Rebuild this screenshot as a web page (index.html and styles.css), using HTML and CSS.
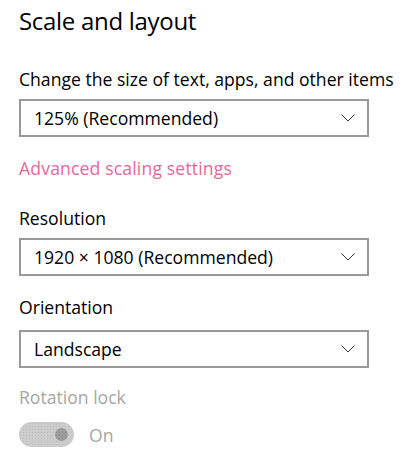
FILE: index.html
```html
<!DOCTYPE html>
<html>
<head>
<meta charset="utf-8">
<link rel="stylesheet" href="styles.css">
</head>
<body>
<div class="page">
  <h1 class="title">Scale and layout</h1>
  <div class="label label-first">Change the size of text, apps, and other items</div>
  <div class="select">
    <span class="select-text">125% (Recommended)</span>
    <svg class="chev" width="14" height="8" viewBox="0 0 14 8"><path d="M0.5 0.5 L7 7 L13.5 0.5" fill="none" stroke="#333" stroke-width="1"/></svg>
  </div>
  <div class="link">Advanced scaling settings</div>
  <div class="label label-res">Resolution</div>
  <div class="select">
    <span class="select-text">1920 × 1080 (Recommended)</span>
    <svg class="chev" width="14" height="8" viewBox="0 0 14 8"><path d="M0.5 0.5 L7 7 L13.5 0.5" fill="none" stroke="#333" stroke-width="1"/></svg>
  </div>
  <div class="label label-orient">Orientation</div>
  <div class="select select-orient">
    <span class="select-text">Landscape</span>
    <svg class="chev" width="14" height="8" viewBox="0 0 14 8"><path d="M0.5 0.5 L7 7 L13.5 0.5" fill="none" stroke="#333" stroke-width="1"/></svg>
  </div>
  <div class="label label-disabled">Rotation lock</div>
  <div class="toggle-row">
    <div class="toggle"><div class="knob"></div></div>
    <span class="toggle-text">On</span>
  </div>
</div>
</body>
</html>
```
FILE: styles.css
```css
html, body {
  margin: 0;
  padding: 0;
  background: #ffffff;
}
.page {
  padding: 4px 0 0 19px;
  font-family: "Open Sans", "Noto Sans", sans-serif;
  color: #000;
}
.title {
  margin: 0;
  font-size: 24px;
  font-weight: 400;
  line-height: 34px;
  letter-spacing: -0.3px;
}
.label {
  font-size: 17.6px;
  line-height: 24px;
}
.label-first {
  margin-top: 29px;
}
.select {
  box-sizing: border-box;
  width: 350px;
  height: 38px;
  border: 2px solid #999999;
  display: flex;
  align-items: center;
  justify-content: space-between;
  padding: 0 12px 0 13px;
  margin-top: 8px;
}
.select-orient {
  margin-top: 11px;
}
.select-text {
  font-size: 17.6px;
}
.chev {
  display: block;
}
.link {
  margin-top: 19px;
  font-size: 17.6px;
  line-height: 24px;
  color: #e8679b;
  letter-spacing: 0.15px;
}
.label-res {
  margin-top: 26px;
}
.label-orient {
  margin-top: 19px;
}
.label-disabled {
  margin-top: 17px;
  color: #a6a6a6;
}
.toggle-row {
  display: flex;
  align-items: center;
  gap: 15px;
  margin-top: 13px;
}
.toggle {
  box-sizing: border-box;
  width: 55px;
  height: 25px;
  border-radius: 13px;
  background-color: #cccccc;
  background-image: radial-gradient(circle, #bdbdbd 0.6px, transparent 0.8px);
  background-size: 3px 3px;
  display: flex;
  align-items: center;
  justify-content: flex-end;
  padding-right: 6px;
}
.knob {
  width: 13px;
  height: 13px;
  border-radius: 50%;
  background-color: #9c9c9c;
  background-image: radial-gradient(circle, #8a8a8a 0.6px, transparent 0.8px);
  background-size: 3px 3px;
}
.toggle-text {
  font-size: 17.6px;
  color: #a6a6a6;
}
```
